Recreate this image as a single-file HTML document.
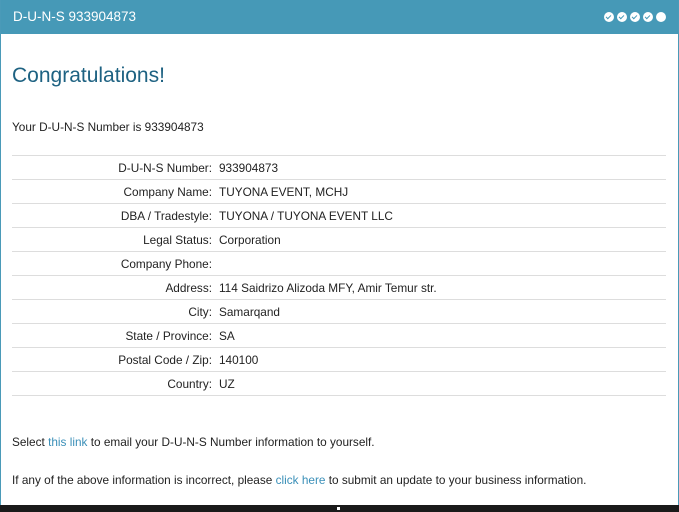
<!DOCTYPE html>
<html><head><style>
body{margin:0;width:679px;height:512px;background:#fff;font-family:"Liberation Sans",sans-serif;overflow:hidden;position:relative;color:#222}
.panel{position:absolute;left:0;top:0;width:677px;height:505px;border:1px solid #4a9ab8;border-top:none;box-sizing:content-box}
.hdr{height:34px;background:#4699b7;color:#fff;font-size:13.5px;line-height:34px;padding-left:12px;position:relative}
.dots{position:absolute;right:12px;top:12px;display:flex;gap:3px}
.dots span{width:10px;height:10px;border-radius:50%;background:#fff;display:block;position:relative}
.dots span.c::after{content:"";position:absolute;left:3px;top:2px;width:2px;height:4px;border:solid #4699b7;border-width:0 1.3px 1.3px 0;transform:rotate(45deg)}
h1{position:absolute;left:12px;top:64px;margin:0;font-weight:normal;font-size:21px;color:#1e6282}
.p{position:absolute;left:12px;font-size:11.8px}
a{color:#3a8fb8;text-decoration:none}
table{position:absolute;left:12px;top:155px;width:654px;border-collapse:collapse;font-size:11.8px}
td{height:23px;border-top:1px solid #ddd;padding:0}
tr:last-child td{border-bottom:1px solid #ddd}
td.l{width:200px;text-align:right;padding-right:7px}
.bar{position:absolute;left:0;top:505px;width:679px;height:7px;background:#1a1a1a}
.bar i{position:absolute;left:337px;top:2px;width:3px;height:3px;background:#fff}
</style></head><body>
<div class="panel">
<div class="hdr">D-U-N-S 933904873<div class="dots"><span class="c"></span><span class="c"></span><span class="c"></span><span class="c"></span><span></span></div></div>
</div>
<h1>Congratulations!</h1>
<div class="p" style="top:120px">Your D-U-N-S Number is 933904873</div>
<table>
<tr><td class="l">D-U-N-S Number:</td><td>933904873</td></tr>
<tr><td class="l">Company Name:</td><td>TUYONA EVENT, MCHJ</td></tr>
<tr><td class="l">DBA / Tradestyle:</td><td>TUYONA / TUYONA EVENT LLC</td></tr>
<tr><td class="l">Legal Status:</td><td>Corporation</td></tr>
<tr><td class="l">Company Phone:</td><td></td></tr>
<tr><td class="l">Address:</td><td>114 Saidrizo Alizoda MFY, Amir Temur str.</td></tr>
<tr><td class="l">City:</td><td>Samarqand</td></tr>
<tr><td class="l">State / Province:</td><td>SA</td></tr>
<tr><td class="l">Postal Code / Zip:</td><td>140100</td></tr>
<tr><td class="l">Country:</td><td>UZ</td></tr>
</table>
<div class="p" style="top:435px">Select <a>this link</a> to email your D-U-N-S Number information to yourself.</div>
<div class="p" style="top:473px">If any of the above information is incorrect, please <a>click here</a> to submit an update to your business information.</div>
<div class="bar"><i></i></div>
</body></html>
